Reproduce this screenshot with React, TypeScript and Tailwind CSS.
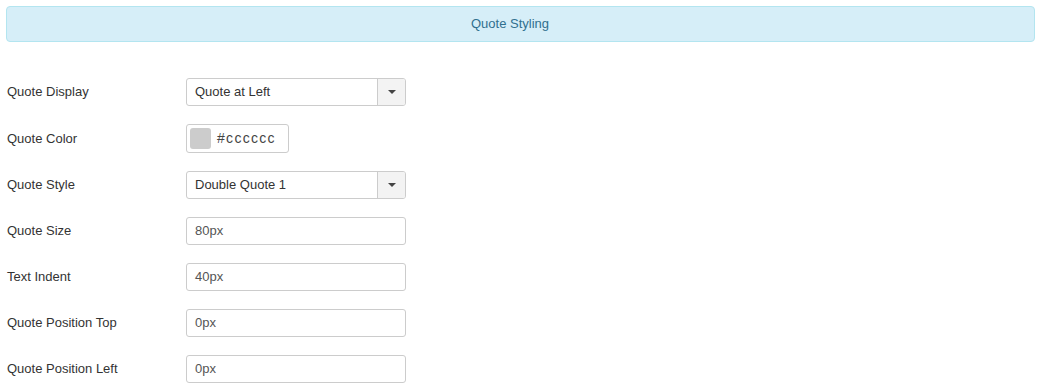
const Caret = () => (
  <svg width="8" height="4" viewBox="0 0 8 4" className="block">
    <path d="M0 0 L8 0 L4 4 Z" fill="#444" />
  </svg>
);

const Field = ({
  label,
  tall,
  children,
}: {
  label: string;
  tall?: boolean;
  children: React.ReactNode;
}) => (
  <div className={`flex items-center ${tall ? "h-[29px]" : "h-[28px]"}`}>
    <label className="w-[180px] pl-px text-[13px] text-[#333]">{label}</label>
    {children}
  </div>
);

const SelectBox = ({ value }: { value: string }) => (
  <div className="flex w-[220px] h-[28px] border border-[#ccc] rounded-[3px] bg-white overflow-hidden">
    <div className="flex-1 flex items-center pl-[8px] text-[13px] text-[#333]">{value}</div>
    <div className="w-[28px] flex items-center justify-center border-l border-[#ccc] bg-[#f3f3f3]">
      <Caret />
    </div>
  </div>
);

const TextBox = ({ value }: { value: string }) => (
  <div className="flex items-center w-[220px] h-[28px] border border-[#ccc] rounded-[3px] bg-white pl-[8px] text-[13px] text-[#555]">
    {value}
  </div>
);

export default function App() {
  return (
    <div className="bg-white w-[1044px] h-[387px] pl-[6px] pr-[9px] pt-[6px] font-['Liberation_Sans',Arial,sans-serif]">
      <div className="h-[36px] flex items-center justify-center pr-[21px] rounded-[4px] border border-[#b3e5f0] bg-[#d6eef8] text-[13px] text-[#31708f]">
        Quote Styling
      </div>
      <div className="mt-[36px] flex flex-col gap-[18px]">
        <Field label="Quote Display">
          <SelectBox value="Quote at Left" />
        </Field>
        <Field label="Quote Color" tall>
          <div className="flex items-center w-[103px] h-[29px] border border-[#ccc] rounded-[3px] bg-white pl-[3px] gap-[6px]">
            <div className="w-[21px] h-[21px] rounded-[3px] bg-[#cccccc]" />
            <span className="text-[14px] text-[#444] tracking-[1.3px]">#cccccc</span>
          </div>
        </Field>
        <Field label="Quote Style">
          <SelectBox value="Double Quote 1" />
        </Field>
        <Field label="Quote Size">
          <TextBox value="80px" />
        </Field>
        <Field label="Text Indent">
          <TextBox value="40px" />
        </Field>
        <Field label="Quote Position Top">
          <TextBox value="0px" />
        </Field>
        <Field label="Quote Position Left">
          <TextBox value="0px" />
        </Field>
      </div>
    </div>
  );
}
